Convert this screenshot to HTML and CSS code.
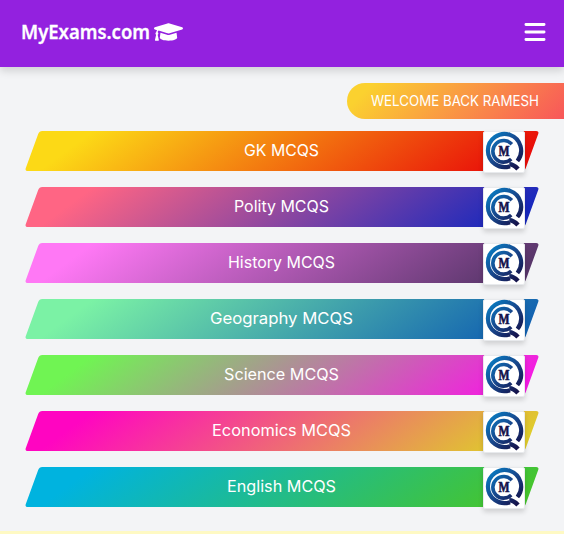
FILE: index.html
```html
<!DOCTYPE html>
<html lang="en">
<head>
<meta charset="utf-8">
<title>MyExams.com</title>
<link rel="stylesheet" href="styles.css">
</head>
<body>
<header class="navbar">
  <div class="brand">
    <svg class="brand-name" width="130" height="32"><text x="0" y="22.5" textLength="129" lengthAdjust="spacingAndGlyphs">MyExams.com</text></svg>
    <svg class="cap" viewBox="0 0 640 512"><path d="M622 153 343 67c-15-5-31-5-46 0L18 153c-24 7-24 39 0 47l49 15c-11 13-17 29-18 47-10 6-17 16-17 28 0 11 6 21 15 27L21 432c-2 8 4 16 12 16h62c8 0 14-8 12-16L81 317c9-6 15-16 15-27s-6-21-15-27c1-15 8-29 21-38l195 60c9 3 27 7 46 0l279-85c24-8 24-40 0-47zM352 316c-30 9-52 4-64 0l-145-45-15 113c0 35 86 64 192 64s192-29 192-64l-15-113z"/></svg>
  </div>
  <svg class="menu" viewBox="0 0 22 20"><path d="M1.9 2.5h18.2M1.9 10h18.2M1.9 17.5h18.2"/></svg>
</header>
<main>
  <div class="welcome"><svg width="168" height="36"><text x="0" y="23" textLength="168" lengthAdjust="spacingAndGlyphs">WELCOME BACK RAMESH</text></svg></div>
  <nav class="subjects" id="subjects"></nav>
</main>
<footer class="footer"></footer>
<template id="logo">
  <svg class="logo" viewBox="1 1 40 40">
    <defs><linearGradient id="ink" gradientUnits="userSpaceOnUse" x1="6" y1="6" x2="35" y2="36"><stop offset="0" stop-color="#087ac0"/><stop offset=".45" stop-color="#174b91"/><stop offset="1" stop-color="#15134c"/></linearGradient></defs>
    <g fill="none" stroke="url(#ink)">
      <path stroke-width="4.2" d="M27 35.2A16.6 16.6 0 1 1 34.4 30"/>
      <path stroke-width="3.6" d="M28.8 13.2A10.8 10.8 0 1 0 28.2 28"/>
      <path stroke-width="4.6" d="M26.3 33.2Q30.5 33.2 35 38"/>
    </g>
    <text x="15.6" y="24.6" textLength="11" lengthAdjust="spacingAndGlyphs">M</text>
  </svg>
</template>
<script src="script.js"></script>
</body>
</html>
```
FILE: styles.css
```css
* { box-sizing: border-box; }
body {
  margin: 0;
  height: 534px;
  display: flex;
  flex-direction: column;
  overflow: hidden;
  background: #f3f4f6;
  font-family: Inter, sans-serif;
}
svg { display: block; overflow: visible; }
text { fill: #fff; }
.navbar {
  flex: none;
  height: 67px;
  padding: 0 18px 3px 21px;
  display: flex;
  align-items: center;
  justify-content: space-between;
  background: #9321df;
  box-shadow: 0 4px 8px rgba(0, 0, 0, .14);
}
.brand { display: flex; align-items: center; gap: 3px; }
.brand-name { font: 600 20px "Noto Sans", sans-serif; }
.brand-name text { stroke: #fff; stroke-width: .3; }
.cap { width: 29px; height: 24px; fill: #fff; }
.menu { width: 22px; height: 20px; fill: none; stroke: #fff; stroke-width: 2.8; stroke-linecap: round; }
main { flex: 1; padding-top: 16px; }
.welcome {
  width: 217px;
  height: 36px;
  margin-left: auto;
  padding-left: 24px;
  border-radius: 18px 0 0 18px;
  background: linear-gradient(135deg, #fbd12f 10%, #f8565a 100%);
  font-size: 14px;
}
.subjects { display: grid; gap: 16px; margin: 12px 32px 0; }
.subject { position: relative; height: 40px; padding-right: 1px; display: flex; justify-content: center; font-size: 16px; }
.shape {
  position: absolute;
  inset: 0;
  transform: skewX(-20deg);
  border-radius: 3px;
  background: linear-gradient(135deg, var(--from) 10%, var(--to) 96%);
}
.label { position: relative; height: 40px; }
.logo {
  position: absolute;
  top: 0;
  right: 7px;
  width: 42px;
  height: 42px;
  border: 1px solid #e8eaed;
  border-radius: 2px;
  background: #fff;
  box-shadow: 0 3px 5px rgba(0, 0, 0, .15);
}
.logo text { fill: #15134c; stroke: #15134c; stroke-width: .6; font: 700 14px "Liberation Serif", serif; }
.footer { flex: none; height: 3px; background: #fef9c3; }
```
FILE: script.js
```js
const subjects = [
  ["GK MCQS", 75, "#fcd916", "#e90d09"],
  ["Polity MCQS", 95, "#ff6584", "#1728bd"],
  ["History MCQS", 107, "#ff78f5", "#58366a"],
  ["Geography MCQS", 143, "#7bf2a5", "#1262b1"],
  ["Science MCQS", 115, "#70f453", "#f51be3"],
  ["Economics MCQS", 139, "#ff05c1", "#dfcb2c"],
  ["English MCQS", 109, "#00b3df", "#46c52d"]
];
const list = document.getElementById("subjects");
const logo = document.getElementById("logo");
for (const [name, width, from, to] of subjects) {
  const row = document.createElement("div");
  row.className = "subject";
  row.style.setProperty("--from", from);
  row.style.setProperty("--to", to);
  row.innerHTML = `<div class="shape"></div><svg class="label" width="${width}" height="40"><text x="0" y="25" textLength="${width}" lengthAdjust="spacingAndGlyphs">${name}</text></svg>`;
  row.append(logo.content.cloneNode(true));
  list.append(row);
}
```
